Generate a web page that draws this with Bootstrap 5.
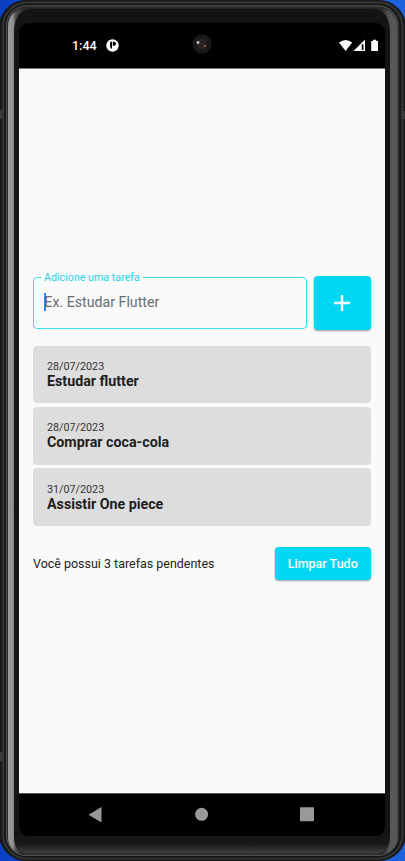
<!DOCTYPE html>
<html lang="pt-BR">
<head>
<meta charset="utf-8">
<meta name="viewport" content="width=device-width, initial-scale=1">
<title>Lista de tarefas</title>
<link href="https://cdn.jsdelivr.net/npm/bootstrap@5.3.0/dist/css/bootstrap.min.css" rel="stylesheet">
<style>
  body { font-family: Roboto, "Liberation Sans", sans-serif; background: linear-gradient(90deg, #0b3fc4, #1b62dc); color: #222; }
  .phone { width: 405px; height: 861px; padding: 23px 20px 25px 19px; }
  .shell { inset: 0; }
  .screen { border-radius: 9px; background: #000; }
  .status-bar { height: 46px; padding: 0 6px 0 53px; border-bottom: 1px solid #777; font-size: 12.5px; font-weight: 500; }
  .status-time { width: 34px; padding-top: 1px; }
  .lens { left: 173px; top: 11px; }
  .app { background: #fafafa; padding: 207px 14.5px 0 14px; }
  .entry { gap: 7px; height: 54px; }
  .task-field { height: 57.5px; margin: -4.5px 0 0; border: 1px solid #3fdcf3; border-radius: 4px; padding: 0 0 1px 10px; color: #6c6c6c; font-size: 14.2px; line-height: 18px; }
  .task-field legend { float: none; width: auto; font-size: 10.7px; line-height: 12px; color: #25d3ec; margin: 0 0 0 -3px; padding: 0 3px; }
  .caret { width: 1.5px; height: 18px; background: #2b8cf0; margin-right: -1.2px; }
  .hint { margin-top: 9px; }
  .action { background: #00d7f3; color: #fff; border: 0; border-radius: 4px; box-shadow: 0 1px 2px rgba(0,0,0,.4); }
  .action:hover { background: #00c8e2; color: #fff; }
  .add { width: 56.5px; height: 54px; }
  .tasks { margin-top: 15.6px; gap: 3.6px; }
  .task { height: 57.8px; border-radius: 4px; background: #ddd; padding: 14.3px 14px 0; }
  .task-date { font-size: 10.75px; line-height: 13px; color: #333; }
  .task-title { font-size: 14.25px; line-height: 16px; font-weight: 700; color: #1d1d1d; }
  .summary { margin-top: 21.3px; font-size: 12.47px; line-height: 15px; }
  .clear { width: 95.5px; height: 32.5px; padding-top: 2px !important; font-size: 12.5px; font-weight: 500; }
  .nav-keys { height: 43px; border-top: 1px solid #555; }
</style>
</head>
<body class="overflow-hidden">
<div class="phone position-relative d-flex">
  <svg class="shell position-absolute" width="405" height="861" viewBox="0 0 405 861" aria-hidden="true">
    <defs>
      <linearGradient id="rim" x1="0" x2="1"><stop offset="0" stop-color="#999"/><stop offset=".013" stop-color="#929292"/><stop offset=".018" stop-color="#555"/><stop offset=".04" stop-color="#262626"/><stop offset=".96" stop-color="#262626"/><stop offset=".98" stop-color="#555"/><stop offset="1" stop-color="#585858"/></linearGradient>
      <linearGradient id="foot" x1="0" x2="0" y1="0" y2="1"><stop offset="0" stop-color="#151515"/><stop offset=".45" stop-color="#1b1b1b"/><stop offset=".85" stop-color="#3c3c3c"/><stop offset="1" stop-color="#2c2c2c"/></linearGradient>
    </defs>
    <rect x="-1" y="0" width="407" height="861" rx="27" fill="#181818"/>
    <rect x="3" y="2.5" width="399.5" height="856" rx="24" fill="#202020" stroke="#343434" stroke-width="2"/>
    <rect x="5" y="4.3" width="395" height="852.7" rx="22" fill="none" stroke="#111"/>
    <rect x="6.5" y="5.8" width="391.5" height="849.7" rx="20" fill="#2b2b2b" stroke="#505050" stroke-width="1.1"/>
    <rect x="8" y="8" width="389" height="847" rx="18" fill="url(#rim)"/>
    <path d="M14 34Q14 9 32 9H372Q390 9 390 34V836Q390 855 372 855H32Q14 855 14 836Z" fill="#141414"/>
    <path d="M14 836H390Q389 855 372 855H32Q15 855 14 836Z" fill="url(#foot)"/>
    <path d="M0 110h3v9h-3zM0 752h2v9h-2zM401 111h4v8h-4z" fill="#393939"/>
  </svg>
  <main class="screen position-relative flex-grow-1 d-flex flex-column overflow-hidden">
    <header class="status-bar flex-shrink-0 d-flex align-items-center text-white">
      <span class="status-time">1:44</span>
      <svg width="13" height="13" viewBox="0 0 13 13"><circle cx="6.5" cy="6.5" r="6.2" fill="#fff"/><path d="M4.1 2.8h1.9v7.2L4.1 8.3zM6.8 2.8H8a2 2 0 0 1 0 4H6.8z" fill="#000"/></svg>
      <svg class="lens position-absolute" width="20" height="20" viewBox="0 0 20 20"><circle cx="10" cy="10" r="9.5" fill="#191919"/><circle cx="9.8" cy="10" r="5.2" fill="#292323"/><circle cx="6" cy="8.5" r="1.5" fill="#a9a598"/><circle cx="5.8" cy="8.3" r=".7" fill="#fff"/><circle cx="13" cy="12" r="1.1" fill="#a1642f"/></svg>
      <svg class="ms-auto" width="40" height="13" viewBox="0 0 40 13" fill="#fff"><path d="M0 3.5Q6.6-1.5 13.2 3.5L6.6 12z"/><path d="M26 .5V12H14.5zM22.7 5.2V11h1.8V5.2z" fill-rule="evenodd"/><path d="M34 .8h3.3v1.1H39V12h-6.8V1.9H34z"/></svg>
    </header>
    <section class="app flex-grow-1">
      <div class="entry d-flex">
        <fieldset class="task-field flex-grow-1">
          <legend>Adicione uma tarefa</legend>
          <div class="hint d-flex"><span class="caret"></span><span>Ex. Estudar Flutter</span></div>
        </fieldset>
        <button class="btn action add p-0 d-flex align-items-center justify-content-center" type="button" aria-label="Adicionar"><svg width="18" height="18" viewBox="0 0 18 18"><path d="M9 1v16M1 9h16" stroke="#fff" stroke-width="2.4"/></svg></button>
      </div>
      <div class="tasks d-flex flex-column">
        <article class="task"><div class="task-date">28/07/2023</div><div class="task-title">Estudar flutter</div></article>
        <article class="task"><div class="task-date">28/07/2023</div><div class="task-title">Comprar coca-cola</div></article>
        <article class="task"><div class="task-date">31/07/2023</div><div class="task-title">Assistir One piece</div></article>
      </div>
      <div class="summary d-flex align-items-center justify-content-between">
        <span>Você possui 3 tarefas pendentes</span>
        <button class="btn action clear p-0" type="button">Limpar Tudo</button>
      </div>
    </section>
    <footer class="nav-keys flex-shrink-0">
      <svg width="366" height="42" viewBox="0 0 366 42" fill="#999"><path d="M82.5 13v15.5L69.5 20.7z"/><circle cx="182.6" cy="20.3" r="6.5"/><rect x="281" y="13.3" width="14" height="14" rx=".7"/></svg>
    </footer>
  </main>
</div>
<script src="https://cdn.jsdelivr.net/npm/bootstrap@5.3.0/dist/js/bootstrap.bundle.min.js"></script>
</body>
</html>
